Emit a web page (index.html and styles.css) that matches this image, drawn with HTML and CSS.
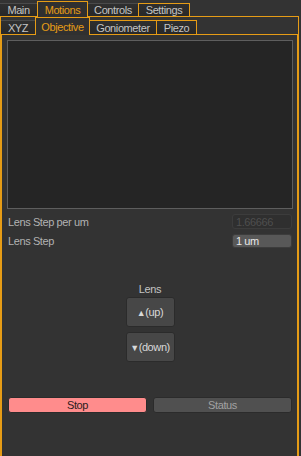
FILE: index.html
```html
<!DOCTYPE html>
<html lang="en">

<head>
    <meta charset="UTF-8">
    <meta name="viewport" content="width=device-width, initial-scale=1.0">

    <link rel="stylesheet" href="styles.css">

    <title>Motions - Objective</title>
</head>

<body>
    <div class="tabs top-tabs">
        <div class="tab main-tab">Main</div>
        <div class="tab active motions-tab">Motions</div>
        <div class="tab controls-tab">Controls</div>
        <div class="tab edge settings-tab">Settings</div>
    </div>

    <div class="pane outer">
        <div class="tabs sub-tabs">
            <div class="tab xyz-tab">XYZ</div>
            <div class="tab active objective-tab">Objective</div>
            <div class="tab edge gonio-tab">Goniometer</div>
            <div class="tab edge piezo-tab">Piezo</div>
        </div>

        <div class="pane inner">
            <div class="view"></div>

            <div class="field">
                <span class="label">Lens Step per um</span>
                <input type="text" class="input" value="1.66666" disabled>
            </div>
            <div class="field">
                <span class="label">Lens Step</span>
                <input type="text" class="input" value="1 um">
            </div>

            <div class="lens">
                <div class="lens-title">Lens</div>
                <button type="button" class="move"><span class="arrow">&#9650;</span>(up)</button>
                <button type="button" class="move"><span class="arrow">&#9660;</span>(down)</button>
            </div>

            <div class="actions">
                <button type="button" class="action stop">Stop</button>
                <button type="button" class="action status">Status</button>
            </div>
        </div>
    </div>
</body>

</html>
```

FILE: styles.css
```css
*,
*::before,
*::after {
    box-sizing: border-box;
}

body {
    margin: 0;
    height: 456px;
    overflow: hidden;
    background: #333333;
    color: #c4c4c4;
    font-family: 'Liberation Sans', Arial, sans-serif;
    font-size: 11px;
    letter-spacing: -0.4px;
}

.tabs {
    display: flex;
    align-items: flex-end;
}

.top-tabs {
    height: 16px;
}

.sub-tabs {
    height: 17px;
}

.tab {
    display: flex;
    align-items: center;
    justify-content: center;
    height: 13px;
    background: linear-gradient(#2f2f2f, #282828);
    border: 1px solid #e69c16;
    border-top-color: #4a4a4a;
    border-bottom: none;
    border-left: none;
    color: #c4c4c4;
}

.sub-tabs .tab {
    height: 14px;
}

.tab.edge {
    border-top-color: #e69c16;
}

.tab.active {
    position: relative;
    z-index: 1;
    height: 16px;
    margin-bottom: -1px;
    background: #303030;
    border: 1px solid #e69c16;
    border-bottom: none;
    color: #e69c16;
}

.sub-tabs .tab.active {
    height: 18px;
}

.main-tab { width: 37px; border-right: none; }
.motions-tab { width: 51px; }
.controls-tab { width: 50px; border-right: none; }
.settings-tab { width: 52px; border-left: 1px solid #e69c16; }

.xyz-tab { width: 34px; border-right: none; }
.objective-tab { width: 55px; }
.gonio-tab { width: 66px; border-right: none; }
.piezo-tab { width: 41px; border-left: 1px solid #e69c16; }

.pane {
    border: 1px solid #e69c16;
    border-bottom: none;
}

.outer {
    width: 299px;
    height: 440px;
}

.inner {
    height: 422px;
    padding: 5px 4px 0 5px;
}

.view {
    height: 169px;
    background: #252525;
    border: 1px solid #5e5e5e;
}

.field {
    display: flex;
    align-items: center;
    justify-content: space-between;
    height: 15px;
    margin-top: 5px;
    padding: 0 1px 0 1px;
}

.field + .field {
    height: 14px;
}

.label {
    color: #b2b2b2;
}

.input {
    width: 60px;
    height: 100%;
    padding: 0 3px;
    border: 1px solid #3c3c3c;
    border-radius: 3px;
    background: #585858;
    color: #e8e8e8;
    font: inherit;
    letter-spacing: inherit;
}

.input:disabled {
    background: #2f2f2f;
    color: #4e4e4e;
}

.lens {
    display: flex;
    flex-direction: column;
    align-items: center;
    margin-top: 35px;
}

.lens-title {
    color: #c4c4c4;
    line-height: 12px;
}

.move {
    width: 49px;
    height: 30px;
    margin-top: 5px;
    padding: 0;
    border: 1px solid #2b2b2b;
    border-radius: 3px;
    background: #474747;
    color: #d8d8d8;
    font: inherit;
    letter-spacing: inherit;
}

.move:first-of-type {
    margin-top: 2px;
}

.arrow {
    font-size: 9px;
}

.actions {
    display: flex;
    gap: 6px;
    margin-top: 35px;
    padding: 0 1px;
}

.action {
    flex: 1;
    height: 16px;
    padding: 0;
    border: 1px solid #2b2b2b;
    border-radius: 3px;
    font: inherit;
    letter-spacing: inherit;
}

.stop {
    background: #ff8c8c;
    color: #2a2020;
}

.status {
    background: #505050;
    color: #a2a2a2;
}
```
